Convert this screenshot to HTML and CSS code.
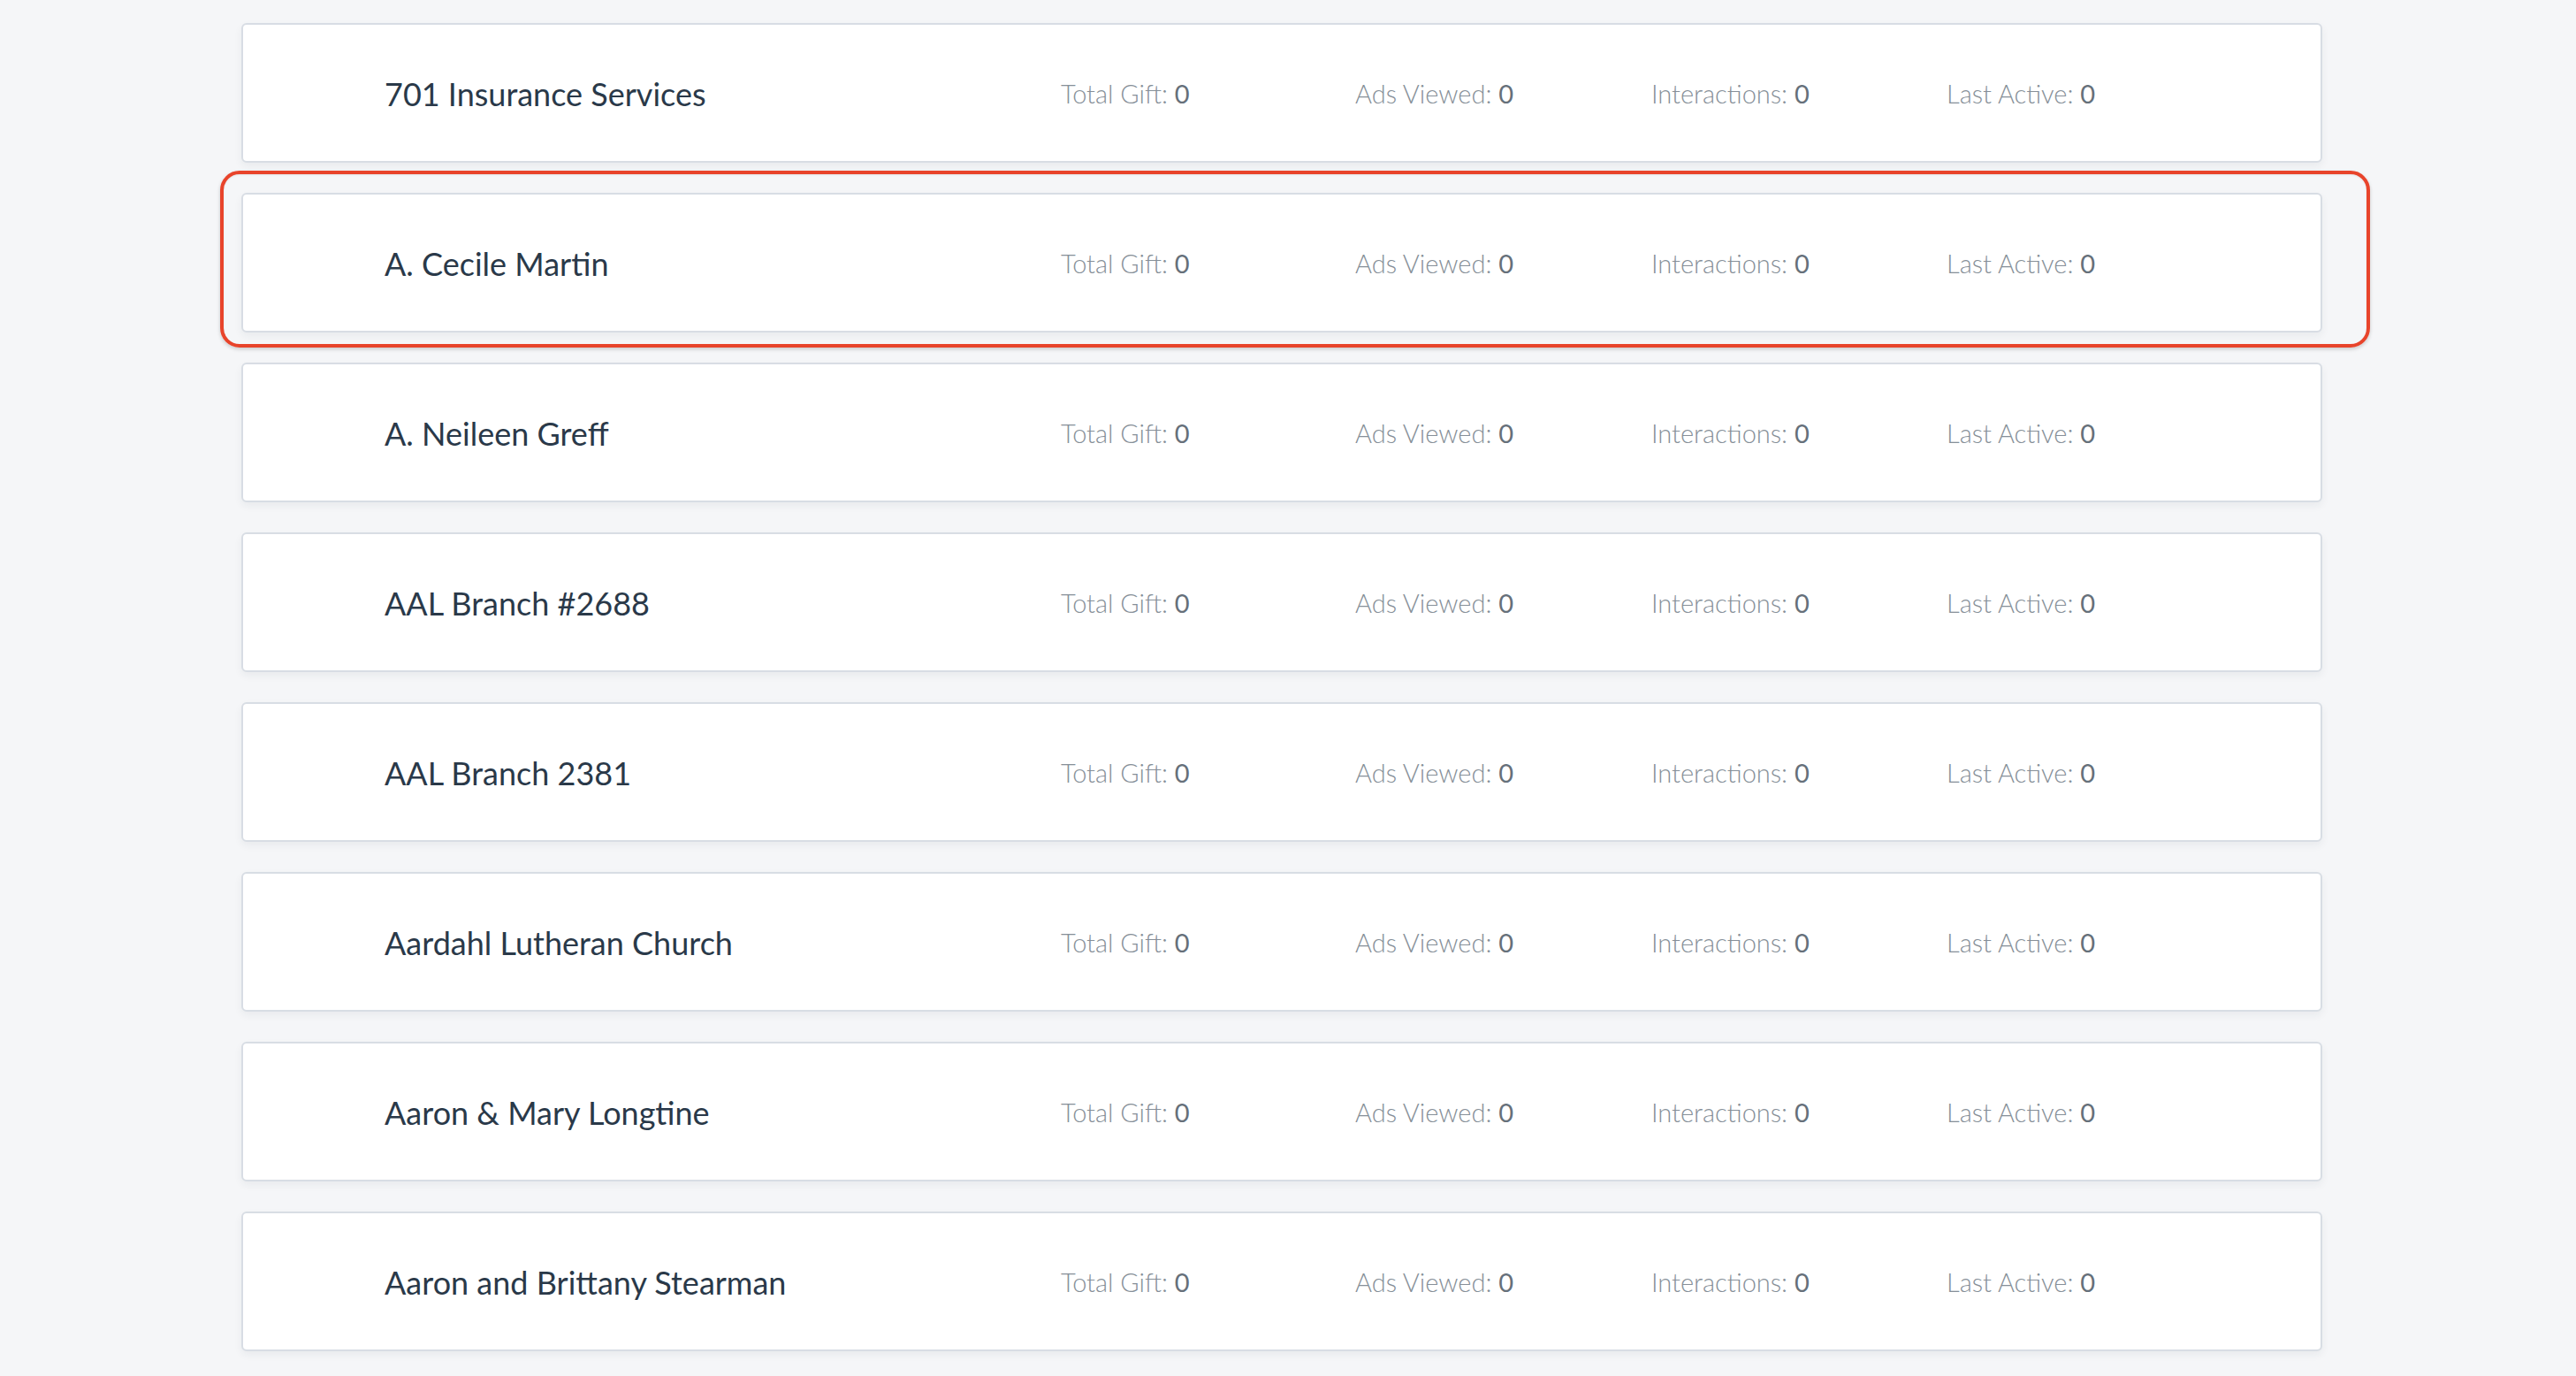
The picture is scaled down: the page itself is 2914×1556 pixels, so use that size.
FILE: index.html
```html
<!DOCTYPE html>
<html lang="en">
<head>
<meta charset="utf-8">
<title>Donors</title>
<link rel="stylesheet" href="styles.css">
</head>
<body>
<main class="list">
  <div class="card">
    <div class="name">701 Insurance Services</div>
    <div class="stat">Total Gift: <b>0</b></div>
    <div class="stat">Ads Viewed: <b>0</b></div>
    <div class="stat">Interactions: <b>0</b></div>
    <div class="stat">Last Active: <b>0</b></div>
  </div>
  <div class="card highlighted">
    <div class="name">A. Cecile Martin</div>
    <div class="stat">Total Gift: <b>0</b></div>
    <div class="stat">Ads Viewed: <b>0</b></div>
    <div class="stat">Interactions: <b>0</b></div>
    <div class="stat">Last Active: <b>0</b></div>
    <span class="callout"></span>
  </div>
  <div class="card">
    <div class="name">A. Neileen Greff</div>
    <div class="stat">Total Gift: <b>0</b></div>
    <div class="stat">Ads Viewed: <b>0</b></div>
    <div class="stat">Interactions: <b>0</b></div>
    <div class="stat">Last Active: <b>0</b></div>
  </div>
  <div class="card">
    <div class="name">AAL Branch #2688</div>
    <div class="stat">Total Gift: <b>0</b></div>
    <div class="stat">Ads Viewed: <b>0</b></div>
    <div class="stat">Interactions: <b>0</b></div>
    <div class="stat">Last Active: <b>0</b></div>
  </div>
  <div class="card">
    <div class="name">AAL Branch 2381</div>
    <div class="stat">Total Gift: <b>0</b></div>
    <div class="stat">Ads Viewed: <b>0</b></div>
    <div class="stat">Interactions: <b>0</b></div>
    <div class="stat">Last Active: <b>0</b></div>
  </div>
  <div class="card">
    <div class="name">Aardahl Lutheran Church</div>
    <div class="stat">Total Gift: <b>0</b></div>
    <div class="stat">Ads Viewed: <b>0</b></div>
    <div class="stat">Interactions: <b>0</b></div>
    <div class="stat">Last Active: <b>0</b></div>
  </div>
  <div class="card">
    <div class="name">Aaron &amp; Mary Longtine</div>
    <div class="stat">Total Gift: <b>0</b></div>
    <div class="stat">Ads Viewed: <b>0</b></div>
    <div class="stat">Interactions: <b>0</b></div>
    <div class="stat">Last Active: <b>0</b></div>
  </div>
  <div class="card">
    <div class="name">Aaron and Brittany Stearman</div>
    <div class="stat">Total Gift: <b>0</b></div>
    <div class="stat">Ads Viewed: <b>0</b></div>
    <div class="stat">Interactions: <b>0</b></div>
    <div class="stat">Last Active: <b>0</b></div>
  </div>
</main>
</body>
</html>
```
FILE: styles.css
```css
html, body {
  margin: 0;
  padding: 0;
  background: #f5f6f8;
  height: 100%;
  overflow: hidden;
}

body {
  font-family: Lato, "Noto Sans", sans-serif;
}

.list {
  display: flex;
  flex-direction: column;
  gap: 34px;
  padding: 26px 0 0 273px;
  width: 2354px;
}

.card {
  position: relative;
  box-sizing: border-box;
  height: 158px;
  background: #ffffff;
  border: 2px solid #d8dde4;
  border-radius: 6px;
  box-shadow: 0 4px 10px rgba(40, 50, 70, 0.06);
  display: grid;
  grid-template-columns: 765px 333px 335px 334px 1fr;
  align-items: center;
  padding-left: 160px;
}

.name {
  font-size: 36px;
  font-weight: 400;
  color: #2a3949;
  white-space: nowrap;
  padding-top: 2px;
}

.stat {
  font-size: 29px;
  font-weight: 300;
  color: #868f98;
  white-space: nowrap;
}

.stat b {
  font-weight: 400;
  color: #66707a;
}

.callout {
  position: absolute;
  left: -26px;
  top: -27px;
  right: -56px;
  bottom: -19px;
  border: 4px solid #e8442b;
  border-radius: 22px;
  box-shadow: 0 2px 4px rgba(0, 0, 0, 0.18), inset 0 1px 2px rgba(0, 0, 0, 0.08);
  pointer-events: none;
}
```
